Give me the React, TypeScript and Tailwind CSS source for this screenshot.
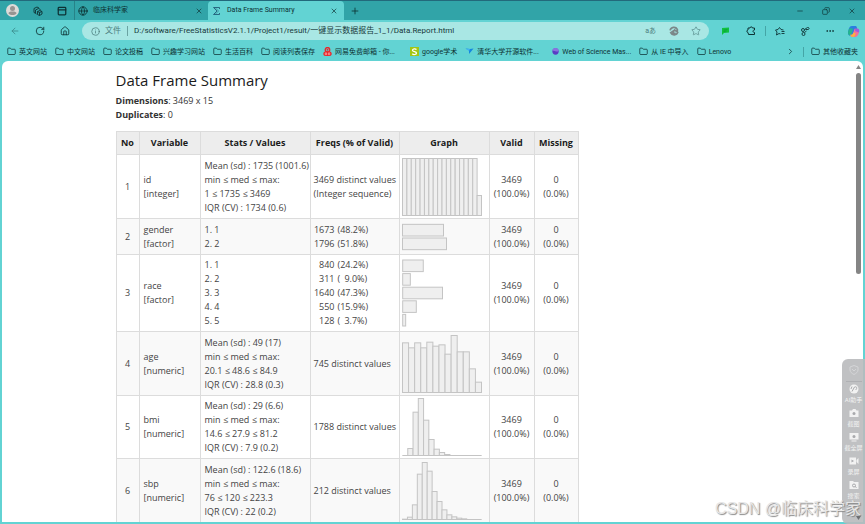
import type { ReactNode } from "react";
import {
  ArrowLeft,
  ChevronRight,
  Copy,
  Folder,
  Globe,
  House,
  Info,
  Minus,
  MoreHorizontal,
  PanelTop,
  Plus,
  RotateCw,
  Star,
  X,
} from "lucide-react";

interface Bookmark {
  label: string;
  icon: "folder" | "mail" | "scholar" | "bird" | "wos";
  truncated?: boolean;
}

const bookmarks: Bookmark[] = [
  { label: "英文网站", icon: "folder" },
  { label: "中文网站", icon: "folder" },
  { label: "论文投稿", icon: "folder" },
  { label: "兴趣学习网站", icon: "folder" },
  { label: "生活百科", icon: "folder" },
  { label: "阅读列表保存", icon: "folder" },
  { label: "网易免费邮箱 - 你...", icon: "mail", truncated: true },
  { label: "google学术", icon: "scholar" },
  { label: "清华大学开源软件...", icon: "bird", truncated: true },
  { label: "Web of Science Mas...", icon: "wos", truncated: true },
  { label: "从 IE 中导入", icon: "folder" },
  { label: "Lenovo", icon: "folder" },
];

interface Row {
  no: number;
  name: string;
  type: string;
  stats: string[];
  freqs: string[] | [string, string][];
  graph: ReactNode;
  height: string;
}

// Histogram drawn on a 240x174 grid, bars anchored to the baseline
function Histogram({ bars }: { bars: number[] }) {
  const step = 237 / bars.length;
  return (
    <svg viewBox="0 0 240 174" className="h-[58px] w-20" fill="#efefef" stroke="#c4c4c4" strokeWidth="3">
      {bars.map((h, i) => (
        <rect key={i} x={1.5 + i * step} y={172.5 - h} width={step} height={h} />
      ))}
      <path d="M1 172.500h238" />
    </svg>
  );
}

function BarGraph({ bars, className }: { bars: number[]; className: string }) {
  return (
    <svg
      viewBox={`0 0 240 ${bars.length * 41}`}
      className={className}
      fill="#efefef"
      stroke="#c4c4c4"
      strokeWidth="3"
    >
      {bars.map((w, i) => (
        <rect key={i} x="1.5" y={3 + i * 41} width={w} height="35" />
      ))}
    </svg>
  );
}

const rows: Row[] = [
  {
    no: 1,
    name: "id",
    type: "[integer]",
    stats: ["Mean (sd) : 1735 (1001.6)", "min ≤ med ≤ max:", "1 ≤ 1735 ≤ 3469", "IQR (CV) : 1734 (0.6)"],
    freqs: ["3469 distinct values", "(Integer sequence)"],
    graph: <Histogram bars={[...Array(17).fill(171), 60]} />,
    height: "h-16",
  },
  {
    no: 2,
    name: "gender",
    type: "[factor]",
    stats: ["1. 1", "2. 2"],
    freqs: [["1673", "48.2%"], ["1796", "51.8%"]],
    graph: <BarGraph bars={[123, 132]} className="h-7 w-20" />,
    height: "h-9",
  },
  {
    no: 3,
    name: "race",
    type: "[factor]",
    stats: ["1. 1", "2. 2", "3. 3", "4. 4", "5. 5"],
    freqs: [["840", "24.2%"], ["311", "9.0%"], ["1640", "47.3%"], ["550", "15.9%"], ["128", "3.7%"]],
    graph: <BarGraph bars={[62, 23, 120, 41, 9]} className="h-[68px] w-20" />,
    height: "h-[77px]",
  },
  {
    no: 4,
    name: "age",
    type: "[numeric]",
    stats: ["Mean (sd) : 49 (17)", "min ≤ med ≤ max:", "20.1 ≤ 48.6 ≤ 84.9", "IQR (CV) : 28.8 (0.3)"],
    freqs: ["745 distinct values"],
    graph: <Histogram bars={[149, 134, 149, 134, 151, 139, 143, 115, 171, 122, 122, 71, 31]} />,
    height: "h-16",
  },
  {
    no: 5,
    name: "bmi",
    type: "[numeric]",
    stats: ["Mean (sd) : 29 (6.6)", "min ≤ med ≤ max:", "14.6 ≤ 27.9 ≤ 81.2", "IQR (CV) : 7.9 (0.2)"],
    freqs: ["1788 distinct values"],
    graph: <Histogram bars={[0, 21, 130, 171, 106, 48, 19, 9, 3, 0, 0, 0, 0, 0, 0]} />,
    height: "h-[63px]",
  },
  {
    no: 6,
    name: "sbp",
    type: "[numeric]",
    stats: ["Mean (sd) : 122.6 (18.6)", "min ≤ med ≤ max:", "76 ≤ 120 ≤ 223.3", "IQR (CV) : 22 (0.2)"],
    freqs: ["212 distinct values"],
    graph: <Histogram bars={[1, 7, 44, 136, 171, 145, 84, 54, 29, 14, 8, 4, 2, 0, 0, 0]} />,
    height: "h-16",
  },
];

function BookmarkIcon({ icon }: { icon: Bookmark["icon"] }) {
  switch (icon) {
    case "mail":
      return (
        <svg viewBox="0 0 20 22" className="h-2.5 w-[9px]">
          <circle cx="10" cy="6" r="5" fill="none" stroke="#e8262b" strokeWidth="3" />
          <circle cx="10" cy="6" r="2" fill="#e8262b" />
          <rect x="1" y="10" width="18" height="10" rx="4" fill="#e8262b" />
          <path d="M5 13v4h3v-4zM12 13v4h3v-4z" fill="none" stroke="#f7b5b5" strokeWidth="1.500" />
        </svg>
      );
    case "scholar":
      return (
        <svg viewBox="0 0 18 18" className="h-[9px] w-[9px]">
          <rect width="18" height="18" fill="#a3c614" />
          <path d="M13 5C11 3 5 3 5 6.500s8 2 8 5.500-6 4-8.500 1.500" fill="none" stroke="#fff" strokeWidth="2.500" />
        </svg>
      );
    case "bird":
      return (
        <svg viewBox="0 0 18 18" className="h-[9px] w-[9px]">
          <path d="M1 3l9 1 7-1-4 5-5 6 0-7z" fill="#1687e0" />
          <path d="M1 3l9 1-2 4z" fill="#43b4f2" />
        </svg>
      );
    case "wos":
      return (
        <svg viewBox="0 0 18 18" className="h-[9px] w-[9px]">
          <circle cx="9" cy="9" r="8" fill="#5b3bc4" />
          <path d="M1 8a8 8 0 0 1 16 0c-5 4-11-3-16 0z" fill="#8a72df" />
        </svg>
      );
    default:
      return <Folder className="h-[9px] w-[9px]" strokeWidth={2} />;
  }
}

function TabStrip() {
  return (
    <div className="flex h-5 shrink-0 items-stretch border-t border-[#22697b] bg-[#31a4a8]">
      <div className="flex w-[74px] items-center gap-3.5 pl-1.5">
        <button aria-label="Profile">
          <svg viewBox="0 0 26 26" className="h-[13px] w-[13px]">
            <circle cx="13" cy="13" r="13" fill="#dedbd9" />
            <circle cx="13" cy="9" r="5" fill="#979492" />
            <path d="M5 19c0-3 3-4 8-4s8 1 8 4c-4 4-12 4-16 0z" fill="#979492" />
          </svg>
        </button>
        <button aria-label="Workspaces">
          <svg viewBox="0 0 20 20" className="h-2.5 w-2.5" fill="none" stroke="currentColor" strokeWidth="1.800">
            <path d="M4 14l-2-1V5l6-3 4 2M7 16l-2-1V8l6-3 4 2" />
            <path d="M9 11l5-2 4 2v5l-5 3-4-2z" />
            <path d="M9 11l4 2 5-2M13 13v6" />
          </svg>
        </button>
        <button aria-label="Tab actions">
          <PanelTop className="h-2.5 w-2.5" strokeWidth={3} />
        </button>
      </div>
      <button className="flex w-[134px] items-center border-l border-[#278388] pl-[3px] pr-[5px] text-[7px]">
        <Globe className="mr-[5px] h-2.5 w-2.5" />
        临床科学家
        <X className="ml-auto h-2 w-2" />
      </button>
      <button className="flex w-[136px] items-center rounded-t bg-[#62d3d3] pl-1 pr-1.5 text-[7px]">
        <svg viewBox="0 0 18 20" className="mr-1.5 h-2.5 w-[9px]" fill="none" stroke="#205f79" strokeWidth="1.800">
          <path d="M15 6V3H3l7 7-7 7h12v-3" />
          <path d="M6 3l7 7-7 7" strokeWidth="1" />
        </svg>
        Data Frame Summary
        <X className="ml-auto h-2 w-2" />
      </button>
      <button aria-label="New tab" className="ml-1.5">
        <Plus className="h-2.5 w-2.5" />
      </button>
      <div className="ml-auto flex items-center gap-[18px] pr-[9px]">
        <button aria-label="Minimize">
          <Minus className="h-2 w-2" />
        </button>
        <button aria-label="Restore">
          <Copy className="h-2 w-2 -scale-x-100" />
        </button>
        <button aria-label="Close">
          <X className="h-2 w-2" />
        </button>
      </div>
    </div>
  );
}

function Toolbar() {
  return (
    <div className="flex h-[22px] shrink-0 items-center">
      <div className="flex w-[82px] items-center gap-[15px] pl-2.5">
        <button aria-label="Back" className="text-[#3b8b8d]">
          <ArrowLeft className="h-2.5 w-2.5" />
        </button>
        <button aria-label="Refresh">
          <RotateCw className="h-2.5 w-2.5" />
        </button>
        <button aria-label="Home">
          <House className="h-2.5 w-2.5" />
        </button>
      </div>
      <label className="flex h-[18px] flex-1 items-center rounded-full bg-[#a9e7e4] pl-[9px] pr-2 text-[8px] text-[#4c7d7d]">
        <Info className="h-[9px] w-[9px]" />
        <span className="ml-[5px] mr-1.5">文件</span>
        <span className="mr-1.5 h-2.5 border-l border-[#6ba3a2]" />
        <input
          className="min-w-0 flex-1 bg-transparent text-[#17393a] outline-none"
          defaultValue="D:/software/FreeStatisticsV2.1.1/Project1/result/一键显示数据报告_1_1/Data.Report.html"
        />
        <button aria-label="Translate" className="mr-[13px] text-[7px]">aあ</button>
        <button aria-label="Tracking" className="mr-3 text-[#7b8788]">
          <svg viewBox="0 0 18 18" className="h-2.5 w-2.5" fill="none" stroke="currentColor" strokeWidth="3">
            <path d="M2 8a7 7 0 0 1 13-2v4l-6-3" />
            <path d="M16 11a7 7 0 0 1-13 1l6-4-2 5 5 0" />
          </svg>
        </button>
        <button aria-label="Favorite">
          <Star className="h-2.5 w-2.5" strokeWidth={1.5} />
        </button>
      </label>
      <div className="flex items-center pl-3 pr-[5px]">
        <button aria-label="Notes" className="mr-4">
          <svg viewBox="0 0 18 16" className="h-2 w-[9px]">
            <path d="M2 2l14-1v10l-10 1-4 4z" fill="#0fc23f" />
            <path d="M5 6l8-1M5 9l6-1" stroke="#0a9d35" strokeWidth="1.500" />
          </svg>
        </button>
        <button aria-label="Extensions" className="mr-[9px]">
          <svg viewBox="0 0 20 20" className="h-2.5 w-2.5" fill="none" stroke="currentColor" strokeWidth="2">
            <path d="M4 4h4c0-3 5-3 5 0h4v4c-4 0-4 5 0 5v4H5l-1-4c-3 0-3-5 0-5z" />
          </svg>
        </button>
        <span className="mr-[9px] h-2.5 border-l border-[#44a5a6]" />
        <button aria-label="Favorites" className="mr-[15px]">
          <svg viewBox="0 0 20 18" className="h-[9px] w-2.5" fill="none" stroke="currentColor" strokeWidth="1.800">
            <path d="M11 14l-3-1-5 3 1-6-3-4 5-1 3-4 3 4 5 1M13 9h6M13 13h6" />
          </svg>
        </button>
        <button aria-label="Essentials" className="mr-[15px]">
          <svg viewBox="0 0 20 20" className="h-2.5 w-2.5" fill="none" stroke="currentColor" strokeWidth="1.800">
            <circle cx="6" cy="8" r="3" />
            <circle cx="7" cy="16" r="3" />
            <path d="M9 7l6-4c4-1 4 4 1 4h-5M9 13l4-3" />
          </svg>
        </button>
        <button aria-label="Settings and more" className="mr-3">
          <MoreHorizontal className="h-2.5 w-2.5" />
        </button>
        <button aria-label="Copilot">
          <svg viewBox="0 0 24 24" className="h-[13px] w-[13px]">
            <path d="M9 2h7c2 0 2 3 3 5l-5 3-4 8-4 2c-3 0-5-4-4-7C3 8 4 2 9 2z" fill="#2a7de1" />
            <path d="M2 13c1-4 2-7 4-7l5 1-3 11c-3 3-7 0-6-5z" fill="#24b68b" />
            <path d="M14 7h5c4 0 4 4 3 7-1 4-3 8-7 8H9c-2 0-3-3-3-4 6 1 6-6 8-11z" fill="#f0719c" />
            <path d="M6 18c4 1 5-1 6-4l4 1c-1 5-2 7-5 7-3 0-4-2-5-4z" fill="#f8b43c" />
            <path d="M15 7h4c4 0 4 4 3 7l-7-3z" fill="#a05ae0" />
          </svg>
        </button>
      </div>
    </div>
  );
}

function BookmarksBar() {
  return (
    <nav className="flex h-[19px] shrink-0 items-center gap-2 whitespace-nowrap px-[7px] text-[7px] leading-[10px]">
      {bookmarks.map((b) => (
        <a
          key={b.label}
          href="#"
          className={b.truncated ? "flex w-[79px] items-center gap-[3px]" : "flex items-center gap-[3px]"}
        >
          <BookmarkIcon icon={b.icon} />
          {b.label}
        </a>
      ))}
      <button aria-label="More bookmarks" className="ml-auto">
        <ChevronRight className="h-[9px] w-[9px]" />
      </button>
      <a href="#" className="flex items-center gap-[3px] border-l border-[#44a5a6] pl-[7px]">
        <Folder className="h-[9px] w-[9px]" strokeWidth={2} />
        其他收藏夹
      </a>
    </nav>
  );
}

function SummaryTable() {
  return (
    <table className="mt-[9px] w-[462px] table-fixed border-collapse text-[9px] leading-[14px] text-[#444]">
      <colgroup>
        <col className="w-[23px]" />
        <col className="w-[61px]" />
        <col className="w-[110px]" />
        <col className="w-[89px]" />
        <col className="w-[90px]" />
        <col className="w-[45px]" />
        <col className="w-[44px]" />
      </colgroup>
      <thead>
        <tr className="h-[23px] bg-[#ededed] text-[#1b1b1b]">
          {["No", "Variable", "Stats / Values", "Freqs (% of Valid)", "Graph", "Valid", "Missing"].map((h) => (
            <th key={h} className="whitespace-nowrap border border-[#dcdcdc] p-0 font-bold">
              {h}
            </th>
          ))}
        </tr>
      </thead>
      <tbody>
        {rows.map((row) => (
          <tr key={row.no} className={`${row.height} even:bg-[#f9f9f9]`}>
            <td className="border border-[#dcdcdc] p-0 text-center">{row.no}</td>
            <td className="border border-[#dcdcdc] px-1 py-0">
              <div>{row.name}</div>
              <div>{row.type}</div>
            </td>
            <td className="whitespace-nowrap border border-[#dcdcdc] py-0 pl-1 pr-0">
              {row.stats.map((s) => (
                <div key={s}>{s}</div>
              ))}
            </td>
            <td className="whitespace-nowrap border border-[#dcdcdc] py-0 pl-[3px] pr-0">
              {row.freqs.map((f) =>
                typeof f === "string" ? (
                  <div key={f}>{f}</div>
                ) : (
                  <div key={f[0]} className="flex">
                    <span className="w-[21px] text-right">{f[0]}</span>
                    <span className="ml-[3px]">(</span>
                    <span className="w-[27px] text-right">{f[1]})</span>
                  </div>
                ),
              )}
            </td>
            <td className="border border-[#dcdcdc] py-0 pl-0.5 pr-0">
              <div className="flex">{row.graph}</div>
            </td>
            <td className="border border-[#dcdcdc] p-0 text-center">
              <div>3469</div>
              <div>(100.0%)</div>
            </td>
            <td className="border border-[#dcdcdc] p-0 text-center">
              <div>0</div>
              <div>(0.0%)</div>
            </td>
          </tr>
        ))}
      </tbody>
    </table>
  );
}

function CaptureButton({ label, children }: { label: string; children: ReactNode }) {
  return (
    <button className="flex h-6 w-full shrink-0 flex-col items-center whitespace-nowrap text-[6px] leading-[12px]">
      {children}
      {label}
    </button>
  );
}

function CapturePanel() {
  return (
    <aside className="absolute bottom-0 right-0 flex h-[165px] w-[23px] flex-col items-center overflow-hidden rounded-l-md bg-[#b9babd]/90 pt-1.5 text-[#f2f2f2]">
      <svg viewBox="0 0 20 20" className="h-2.5 w-2.5 shrink-0" fill="none" stroke="#d4d5d7" strokeWidth="2">
        <path d="M10 1l8 3v6c0 4-4 7-8 9-4-2-8-5-8-9V4z" />
        <path d="M6 8l4 4 4-4" />
      </svg>
      <div className="mb-0.5 mt-1.5 w-4 border-t border-[#afb0b3]" />
      <CaptureButton label="AI助手">
        <svg viewBox="0 0 20 20" className="h-2.5 w-2.5 shrink-0">
          <circle cx="10" cy="10" r="9" fill="currentColor" />
          <path d="M6 15l5-9c5-2 6 3 2 6M6 5l-2 5" fill="none" stroke="#a9aaad" strokeWidth="2" />
        </svg>
      </CaptureButton>
      <CaptureButton label="截图">
        <svg viewBox="0 0 20 20" className="h-2.5 w-2.5 shrink-0">
          <path d="M1 5h5l2-3h5l2 3h4v13H1z" fill="currentColor" />
          <circle cx="10" cy="11" r="3" fill="#a9aaad" />
        </svg>
      </CaptureButton>
      <CaptureButton label="截全屏">
        <svg viewBox="0 0 20 20" className="h-2.5 w-2.5 shrink-0">
          <path d="M1 2h18v13H1zM5 17h10v2H5z" fill="currentColor" />
          <circle cx="10" cy="9" r="3" fill="#a9aaad" />
        </svg>
      </CaptureButton>
      <CaptureButton label="录屏">
        <svg viewBox="0 0 20 20" className="h-2.5 w-2.5 shrink-0">
          <path d="M1 3h13v14H1zM15 8l4-4v12l-4-4z" fill="currentColor" />
          <path d="M5 7l5 3-5 3z" fill="#a9aaad" />
        </svg>
      </CaptureButton>
      <CaptureButton label="搜索">
        <svg viewBox="0 0 20 20" className="h-2.5 w-2.5 shrink-0">
          <path d="M1 2h7l2 2h9v14H1z" fill="currentColor" />
          <path d="M12 13l3 2" stroke="#a9aaad" strokeWidth="2" />
          <circle cx="10" cy="11" r="3" fill="none" stroke="#a9aaad" strokeWidth="2" />
        </svg>
      </CaptureButton>
      <svg viewBox="0 0 10 8" className="mb-1 mr-1 mt-auto h-1 w-[5px] shrink-0 self-end">
        <path d="M0 0h10L5 8z" fill="#6f7073" />
      </svg>
    </aside>
  );
}

export default function App() {
  return (
    <div className="relative flex h-screen flex-col overflow-hidden bg-[#62d3d3] font-[Roboto,'Noto_Sans_CJK_SC',sans-serif] text-[#0d3234]">
      <TabStrip />
      <Toolbar />
      <BookmarksBar />
      <div className="mx-0.5 mb-0.5 flex min-h-0 flex-1 rounded-t-md bg-white font-['Open_Sans','Noto_Sans_CJK_SC',sans-serif]">
        <main className="flex-1 overflow-hidden">
          <div className="mx-auto max-w-[624px] pt-[9px]">
            <h1 className="text-[15px] font-medium leading-5 text-[#1b1b1b]">Data Frame Summary</h1>
            <div className="mt-1 text-[9px] leading-[14px] text-[#333]">
              <p>
                <strong>Dimensions</strong>: 3469 x 15
              </p>
              <p>
                <strong>Duplicates</strong>: 0
              </p>
            </div>
            <SummaryTable />
          </div>
        </main>
        <div className="flex w-2.5 flex-col items-center pt-1">
          <svg viewBox="0 0 10 8" className="h-1 w-[5px]">
            <path d="M5 0l5 8H0z" fill="#858585" />
          </svg>
          <div className="mt-1 h-[201px] w-[5px] rounded-full bg-[#858585]" />
        </div>
      </div>
      <CapturePanel />
      <div className="absolute bottom-[5px] right-1 whitespace-nowrap font-['Liberation_Sans','Noto_Sans_CJK_SC',sans-serif] text-[16px] leading-5 text-[#e6e6e6] [text-shadow:1px_1px_1px_#888]">
        CSDN @临床科学家
      </div>
    </div>
  );
}
